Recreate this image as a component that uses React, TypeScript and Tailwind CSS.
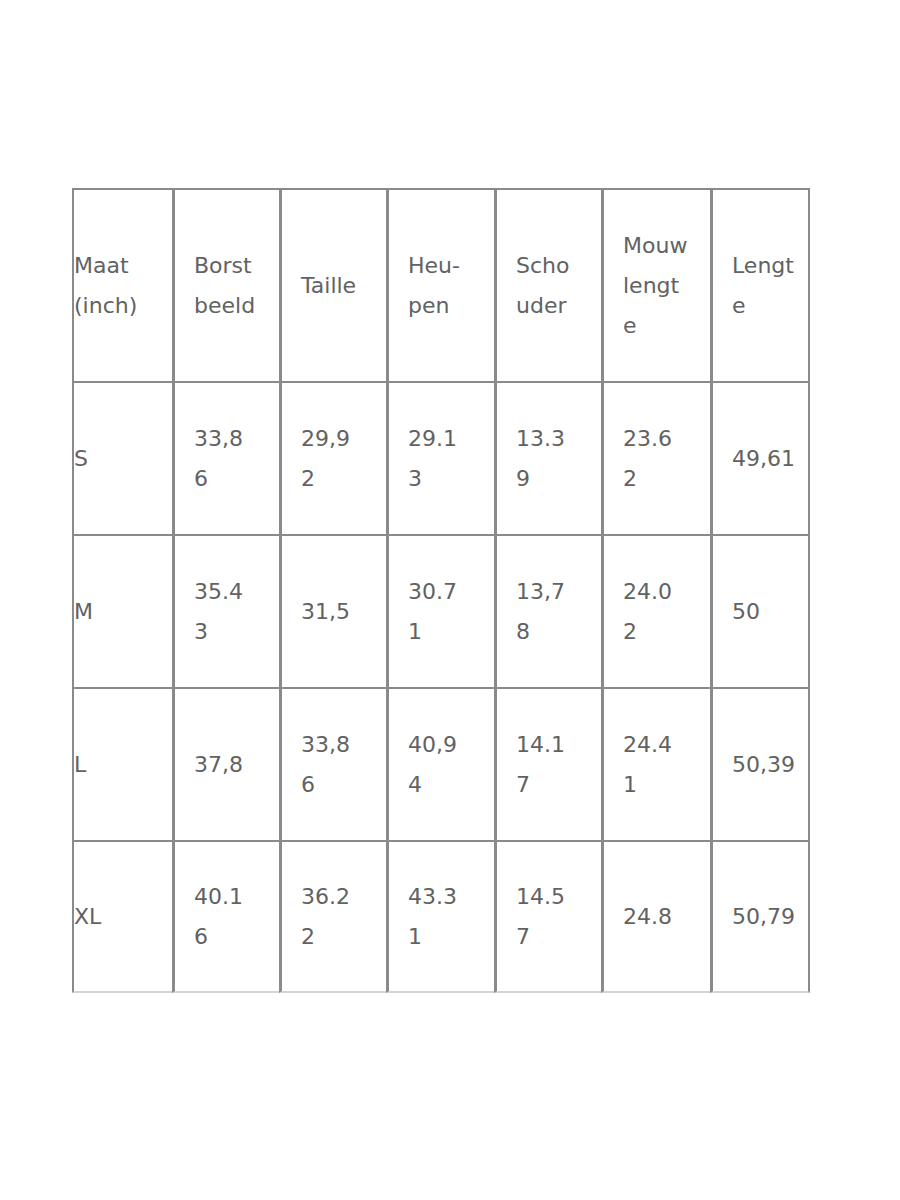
import React from "react"

// Maattabel — elke cel krijgt expliciete regelafbrekingen zoals in het origineel
const HEADER: string[][] = [
  ["Maat", "(inch)"],
  ["Borst", "beeld"],
  ["Taille"],
  ["Heu-", "pen"],
  ["Scho", "uder"],
  ["Mouw", "lengt", "e"],
  ["Lengt", "e"],
]

const ROWS: string[][][] = [
  [["S"], ["33,8", "6"], ["29,9", "2"], ["29.1", "3"], ["13.3", "9"], ["23.6", "2"], ["49,61"]],
  [["M"], ["35.4", "3"], ["31,5"], ["30.7", "1"], ["13,7", "8"], ["24.0", "2"], ["50"]],
  [["L"], ["37,8"], ["33,8", "6"], ["40,9", "4"], ["14.1", "7"], ["24.4", "1"], ["50,39"]],
  [["XL"], ["40.1", "6"], ["36.2", "2"], ["43.3", "1"], ["14.5", "7"], ["24.8"], ["50,79"]],
]

function Cell({ lines, col, last, tall }: { lines: string[]; col: number; last: boolean; tall?: boolean }) {
  return (
    <div
      className={[
        "flex flex-col justify-center border-t-2 border-[#8a8a8a]",
        col === 0 ? "pl-0 border-l-2" : "pl-[19px] border-l-[3px]",
        col === 6 ? "border-r-2" : "",
        last ? "border-b-2 border-b-[#d4d4d4]" : "",
        tall ? "h-[193px]" : "h-[153px]",
      ].join(" ")}
    >
      {lines.map((l, i) => (
        <span key={i} className="block leading-[40px]">
          {l}
        </span>
      ))}
    </div>
  )
}

export default function App() {
  return (
    <div className="min-h-[1200px] w-[900px] bg-white pt-[188px] pl-[72px]">
      <div
        className="grid w-[738px] grid-cols-[100px_107px_107px_108px_107px_109px_100px] text-[22px] text-[#626262]"
        style={{ fontFamily: '"DejaVu Sans", Verdana, sans-serif' }}
      >
        {HEADER.map((h, c) => (
          <Cell key={`h${c}`} lines={h} col={c} last={false} tall />
        ))}
        {ROWS.map((row, r) =>
          row.map((cell, c) => (
            <Cell key={`${r}-${c}`} lines={cell} col={c} last={r === ROWS.length - 1} />
          ))
        )}
      </div>
    </div>
  )
}
